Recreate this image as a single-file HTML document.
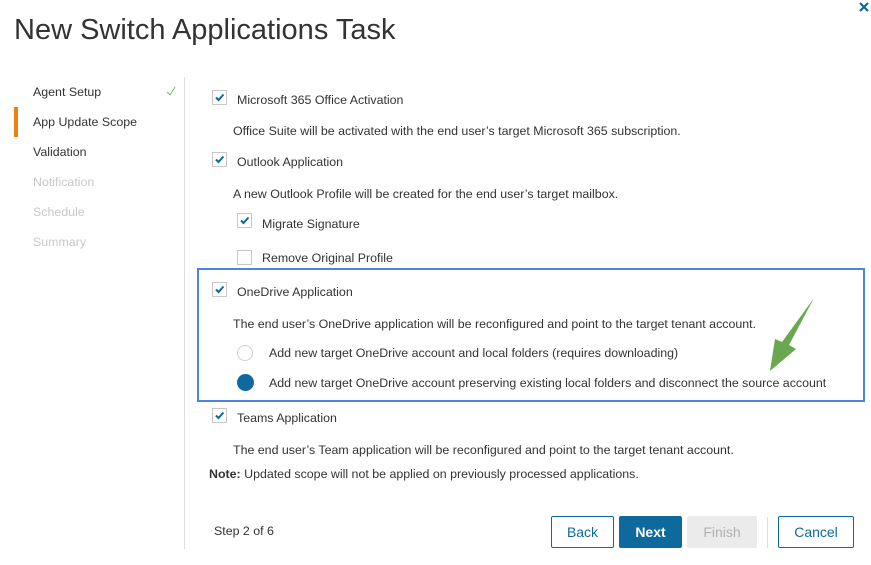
<!DOCTYPE html>
<html><head><style>
body{margin:0;width:871px;height:565px;background:#fff;font-family:"Liberation Sans",sans-serif;color:#333;position:relative;overflow:hidden}
.a{position:absolute;white-space:nowrap}
.t{font-size:12.4px}
.cb{position:absolute;width:13px;height:13px;border:1px solid #c8c8c8;background:#fff}
.cb svg{position:absolute;left:1px;top:1px}
.nav{font-size:12.4px;position:absolute;left:33px}
.btn{position:absolute;top:516px;height:32px;box-sizing:border-box;border:1px solid #0e6a9c;border-radius:2px;color:#0e6a9c;font-size:14px;text-align:center;line-height:31px;background:#fff}
</style></head><body>
<div class="a" style="left:14px;top:14px;font-size:29px;color:#333">New Switch Applications Task</div>
<svg class="a" style="left:859px;top:2px" width="10" height="10" viewBox="0 0 10 10"><path d="M1 1L9 9M9 1L1 9" stroke="#0e6a9c" stroke-width="2.2"/></svg>

<div class="nav" style="top:85px">Agent Setup</div>
<svg class="a" style="left:166px;top:86px" width="10" height="10" viewBox="0 0 10 10"><path d="M1 6L4 9L9 1" stroke="#7dbb6c" stroke-width="1" fill="none"/></svg>
<div class="a" style="left:14px;top:107px;width:4px;height:30px;background:#f07f13"></div>
<div class="nav" style="top:115px">App Update Scope</div>
<div class="nav" style="top:145px">Validation</div>
<div class="nav" style="top:175px;color:#c8c8c8">Notification</div>
<div class="nav" style="top:205px;color:#c8c8c8">Schedule</div>
<div class="nav" style="top:235px;color:#c8c8c8">Summary</div>
<div class="a" style="left:184px;top:77px;width:1px;height:472px;background:#ddd"></div>

<div class="cb" style="left:212px;top:90px"><svg width="11" height="11" viewBox="0 0 11 11"><path d="M2 5.5L4.5 8L9.5 2.5" stroke="#0e6a9c" stroke-width="2" fill="none"/></svg></div>
<div class="a t" style="left:237px;top:93px">Microsoft 365 Office Activation</div>
<div class="a t" style="left:233px;top:124px">Office Suite will be activated with the end user’s target Microsoft 365 subscription.</div>
<div class="cb" style="left:212px;top:152px"><svg width="11" height="11" viewBox="0 0 11 11"><path d="M2 5.5L4.5 8L9.5 2.5" stroke="#0e6a9c" stroke-width="2" fill="none"/></svg></div>
<div class="a t" style="left:237px;top:155px">Outlook Application</div>
<div class="a t" style="left:233px;top:187px">A new Outlook Profile will be created for the end user’s target mailbox.</div>
<div class="cb" style="left:237px;top:213px"><svg width="11" height="11" viewBox="0 0 11 11"><path d="M2 5.5L4.5 8L9.5 2.5" stroke="#0e6a9c" stroke-width="2" fill="none"/></svg></div>
<div class="a t" style="left:262px;top:217px">Migrate Signature</div>
<div class="cb" style="left:237px;top:250px"></div>
<div class="a t" style="left:262px;top:251px">Remove Original Profile</div>

<div class="a" style="left:197px;top:268px;width:664px;height:130px;border:2px solid #4a86da"></div>
<div class="cb" style="left:212px;top:282px"><svg width="11" height="11" viewBox="0 0 11 11"><path d="M2 5.5L4.5 8L9.5 2.5" stroke="#0e6a9c" stroke-width="2" fill="none"/></svg></div>
<div class="a t" style="left:237px;top:285px">OneDrive Application</div>
<div class="a t" style="left:233px;top:317px">The end user’s OneDrive application will be reconfigured and point to the target tenant account.</div>
<div class="a" style="left:237px;top:345px;width:14px;height:14px;border:1px solid #d0d0d0;border-radius:50%"></div>
<div class="a t" style="left:269px;top:346px">Add new target OneDrive account and local folders (requires downloading)</div>
<div class="a" style="left:237px;top:374px;width:17px;height:17px;background:#0e6a9c;border-radius:50%"></div>
<div class="a t" style="left:269px;top:376px">Add new target OneDrive account preserving existing local folders and disconnect the source account</div>
<svg class="a" style="left:765px;top:295px" width="52" height="80" viewBox="0 0 52 80"><path d="M49 3L24 50L31 54L5 76L10 44L17 47Z" fill="#6aa84f"/></svg>

<div class="cb" style="left:212px;top:408px"><svg width="11" height="11" viewBox="0 0 11 11"><path d="M2 5.5L4.5 8L9.5 2.5" stroke="#0e6a9c" stroke-width="2" fill="none"/></svg></div>
<div class="a t" style="left:237px;top:411px">Teams Application</div>
<div class="a t" style="left:233px;top:443px">The end user’s Team application will be reconfigured and point to the target tenant account.</div>
<div class="a t" style="left:209px;top:467px"><b>Note:</b> Updated scope will not be applied on previously processed applications.</div>

<div class="a t" style="left:214px;top:524px">Step 2 of 6</div>
<div class="btn" style="left:551px;width:63px">Back</div>
<div class="btn" style="left:619px;width:63px;background:#0e6a9c;color:#fff;font-weight:bold">Next</div>
<div class="btn" style="left:687px;width:70px;background:#ebebeb;border-color:#ebebeb;color:#b0b0b0">Finish</div>
<div class="a" style="left:767px;top:517px;width:1px;height:31px;background:#ddd"></div>
<div class="btn" style="left:778px;width:76px">Cancel</div>
</body></html>
